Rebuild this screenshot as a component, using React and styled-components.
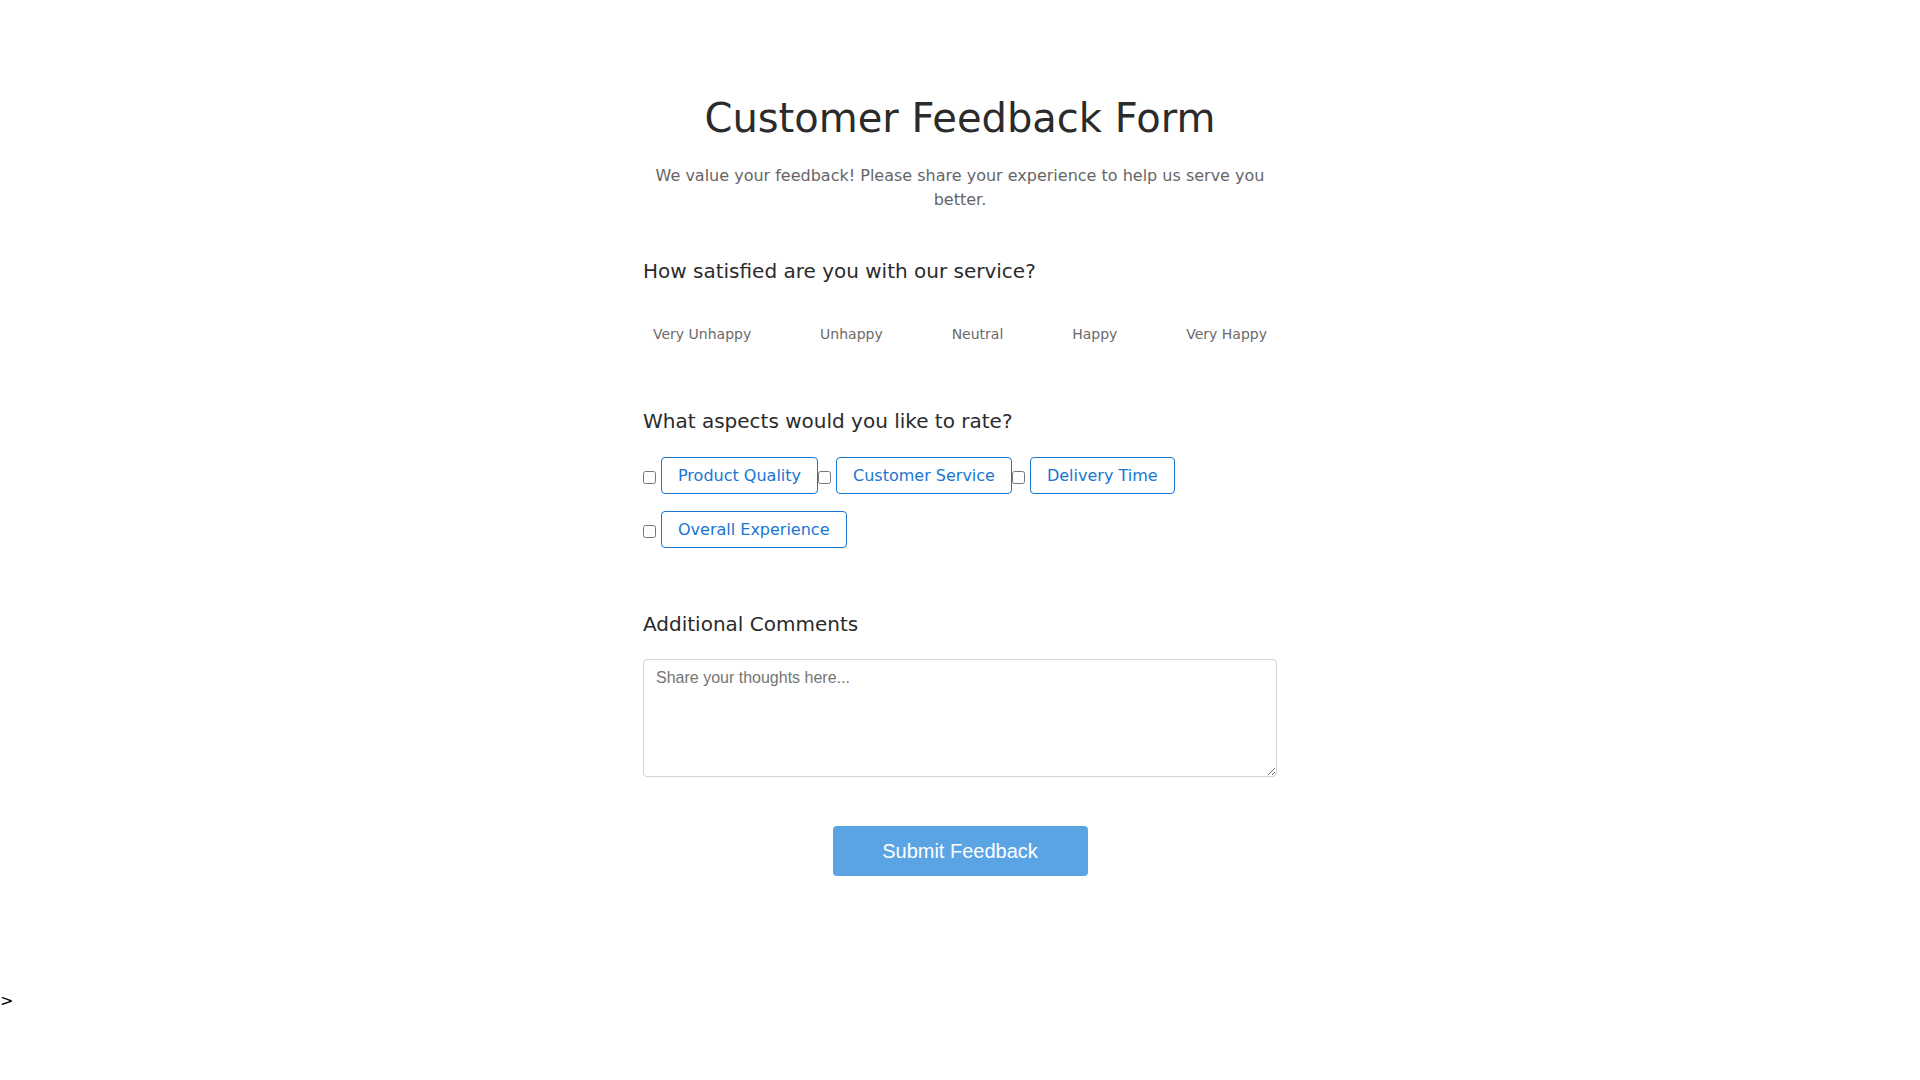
import React from "react";
import styled, { createGlobalStyle } from "styled-components";

const GlobalStyle = createGlobalStyle`
  body {
    margin: 0;
    font-family: "DejaVu Sans", sans-serif;
    background: #ffffff;
    color: #000;
  }
`;

const Container = styled.div`
  width: 634px;
  margin: 0 auto;
  padding: 94px 0 115px;
`;

const Header = styled.div`
  text-align: center;
  margin-bottom: 47px;
`;

const Title = styled.h1`
  font-size: 40px;
  line-height: 48px;
  font-weight: 400;
  color: #2b2b2b;
  margin: 0 0 22px;
`;

const Subtitle = styled.p`
  font-size: 16px;
  line-height: 24px;
  color: #666;
  margin: 0;
`;

const Section = styled.div`
  margin-bottom: ${({ $gap }) => $gap}px;
`;

const SectionTitle = styled.h2`
  font-size: 20px;
  line-height: 24px;
  font-weight: 400;
  color: #2b2b2b;
  margin: 0 0 ${({ $mb = 24 }) => $mb}px;
`;

const RatingRow = styled.div`
  display: flex;
  justify-content: space-between;
`;

const Option = styled.div`
  display: flex;
  flex-direction: column;
  align-items: center;
  padding: 0 10px;
  cursor: pointer;
`;

const Face = styled.span`
  height: 19px;
`;

const OptionLabel = styled.span`
  font-size: 14px;
  line-height: 17px;
  color: #6a6a6a;
`;

const Aspects = styled.div`
  display: flex;
  flex-wrap: wrap;
  row-gap: 17px;
`;

const Aspect = styled.div`
  display: flex;
  align-items: center;
`;

const Check = styled.input`
  width: 13px;
  height: 13px;
  margin: 4px 5px 0 0;
`;

const AspectLabel = styled.label`
  display: inline-block;
  padding: 8px 16px;
  font-size: 16px;
  line-height: 19px;
  color: #1976d2;
  border: 1px solid #1976d2;
  border-radius: 4px;
  cursor: pointer;
`;

const Comments = styled.textarea`
  display: block;
  width: 100%;
  height: 118px;
  box-sizing: border-box;
  padding: 8px 12px 12px;
  border: 1px solid #d4d4d4;
  border-radius: 4px;
  font-family: "Liberation Sans Narrow", "Liberation Sans", Arial, sans-serif;
  font-size: 16px;
  line-height: 19px;
  color: #333;
  &::placeholder {
    color: #757575;
  }
`;

const Actions = styled.div`
  display: flex;
  justify-content: center;
`;

const SubmitButton = styled.button`
  width: 255px;
  height: 50px;
  border: none;
  border-radius: 4px;
  background: #5aa4e4;
  color: #fff;
  font-family: "Liberation Sans", Arial, sans-serif;
  font-size: 20px;
  cursor: pointer;
`;

const Stray = styled.div`
  font-size: 16px;
  line-height: 19px;
`;

const ratings = ["Very Unhappy", "Unhappy", "Neutral", "Happy", "Very Happy"];
const aspects = ["Product Quality", "Customer Service", "Delivery Time", "Overall Experience"];

export default function App() {
  return (
    <>
      <GlobalStyle />
      <Container>
        <Header>
          <Title>Customer Feedback Form</Title>
          <Subtitle>
            We value your feedback! Please share your experience to help us serve you better.
          </Subtitle>
        </Header>

        <Section $gap={66}>
          <SectionTitle>How satisfied are you with our service?</SectionTitle>
          <RatingRow>
            {ratings.map((r) => (
              <Option key={r}>
                <Face />
                <OptionLabel>{r}</OptionLabel>
              </Option>
            ))}
          </RatingRow>
        </Section>

        <Section $gap={64}>
          <SectionTitle>What aspects would you like to rate?</SectionTitle>
          <Aspects>
            {aspects.map((a, i) => (
              <Aspect key={a}>
                <Check type="checkbox" id={`aspect-${i}`} />
                <AspectLabel htmlFor={`aspect-${i}`}>{a}</AspectLabel>
              </Aspect>
            ))}
          </Aspects>
        </Section>

        <Section $gap={49}>
          <SectionTitle $mb={23}>Additional Comments</SectionTitle>
          <Comments placeholder="Share your thoughts here..." />
        </Section>

        <Actions>
          <SubmitButton>Submit Feedback</SubmitButton>
        </Actions>
      </Container>
      <Stray>&gt;</Stray>
    </>
  );
}
